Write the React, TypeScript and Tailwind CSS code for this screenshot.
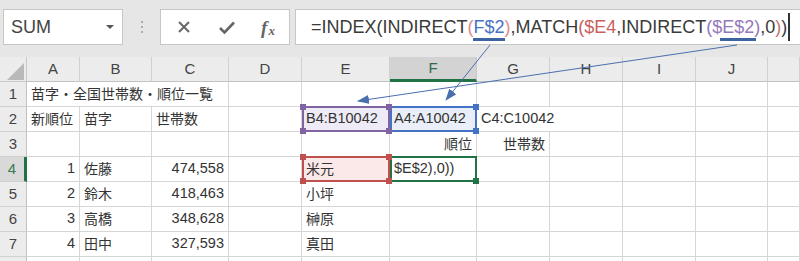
import React from "react";

type BoxKind = "purple" | "blue" | "red" | "green";

type CellDef = {
  t: string;
  right?: boolean;
  cjk?: boolean;
  span?: number;
  box?: BoxKind;
};

const COLS = ["A", "B", "C", "D", "E", "F", "G", "H", "I", "J", "K"];

const ROWS: Record<number, Record<string, CellDef>> = {
  1: { A: { t: "苗字・全国世帯数・順位一覧", cjk: true, span: 3 } },
  2: {
    A: { t: "新順位", cjk: true },
    B: { t: "苗字", cjk: true },
    C: { t: "世帯数", cjk: true },
    E: { t: "B4:B10042", box: "purple" },
    F: { t: "A4:A10042", box: "blue" },
    G: { t: "C4:C10042", span: 2 },
  },
  3: {
    F: { t: "順位", right: true, cjk: true },
    G: { t: "世帯数", right: true, cjk: true },
  },
  4: {
    A: { t: "1", right: true },
    B: { t: "佐藤", cjk: true },
    C: { t: "474,558", right: true },
    E: { t: "米元", cjk: true, box: "red" },
    F: { t: "$E$2),0))", box: "green" },
  },
  5: {
    A: { t: "2", right: true },
    B: { t: "鈴木", cjk: true },
    C: { t: "418,463", right: true },
    E: { t: "小坪", cjk: true },
  },
  6: {
    A: { t: "3", right: true },
    B: { t: "高橋", cjk: true },
    C: { t: "348,628", right: true },
    E: { t: "榊原", cjk: true },
  },
  7: {
    A: { t: "4", right: true },
    B: { t: "田中", cjk: true },
    C: { t: "327,593", right: true },
    E: { t: "真田", cjk: true },
  },
  8: {},
};

function Corner({ pos, color }: { pos: string; color: string }) {
  return <span className={`absolute z-20 size-[6px] ${pos} ${color}`} />;
}

function RangeBox({ kind }: { kind: BoxKind }) {
  if (kind === "purple") {
    return (
      <div className="absolute inset-[-1px_-1px_-1px_0px] border-2 border-[#8064a2] bg-[#efebf6]">
        <Corner pos="-left-[4px] -top-[4px]" color="bg-[#8064a2]" />
        <Corner pos="-right-[4px] -top-[4px]" color="bg-[#8064a2]" />
        <Corner pos="-left-[4px] -bottom-[4px]" color="bg-[#8064a2]" />
        <Corner pos="-right-[4px] -bottom-[4px]" color="bg-[#8064a2]" />
      </div>
    );
  }
  if (kind === "blue") {
    return (
      <div className="absolute inset-[-1px_-1px_-1px_0px] border-2 border-[#4472c4] bg-[#e9eef8]">
        <Corner pos="-right-[4px] -top-[4px]" color="bg-[#4472c4]" />
        <Corner pos="-right-[4px] -bottom-[4px]" color="bg-[#4472c4]" />
      </div>
    );
  }
  if (kind === "red") {
    return (
      <div className="absolute inset-[-1px_-1px_-1px_0px] border-2 border-[#c0504d] bg-[#fbe9e9]">
        <Corner pos="-left-[4px] -top-[4px]" color="bg-[#c0504d]" />
        <Corner pos="-right-[4px] -top-[4px]" color="bg-[#c0504d]" />
        <Corner pos="-left-[4px] -bottom-[4px]" color="bg-[#c0504d]" />
        <Corner pos="-right-[4px] -bottom-[4px]" color="bg-[#c0504d]" />
      </div>
    );
  }
  return (
    <div className="absolute inset-[-1px_-1px_-1px_0px] border-2 border-[#217346]">
      <Corner pos="-right-[4px] -bottom-[4px]" color="bg-[#217346]" />
    </div>
  );
}

function Toolbar() {
  return (
    <div className="flex h-[57px] items-start bg-[#e6e6e6] pt-[9px]">
      {/* name box */}
      <div className="ml-[3px] flex h-[36px] w-[120px] items-center justify-between border border-[#c6c6c6] bg-white pl-[7px] pr-[8px]">
        <span className="text-[18px] leading-none text-[#444]">SUM</span>
        <svg width="8" height="4" viewBox="0 0 8 4">
          <path d="M0 0 L8 0 L4 4 Z" fill="#555" />
        </svg>
      </div>
      {/* grip dots */}
      <div className="flex h-[36px] w-[37px] flex-col items-center justify-center gap-[3px]">
        <span className="size-[2px] rounded-full bg-[#9a9a9a]" />
        <span className="size-[2px] rounded-full bg-[#9a9a9a]" />
        <span className="size-[2px] rounded-full bg-[#9a9a9a]" />
      </div>
      {/* cancel / enter / fx */}
      <div className="flex h-[36px] w-[130px] items-center border border-[#c6c6c6] bg-white">
        <div className="flex w-[46px] justify-center">
          <svg width="12" height="12" viewBox="0 0 12 12">
            <path d="M1 1 L11 11 M11 1 L1 11" stroke="#666" strokeWidth="2" />
          </svg>
        </div>
        <div className="flex w-[40px] justify-center">
          <svg width="16" height="13" viewBox="0 0 16 13">
            <path d="M1 7 L5.5 11.5 L15 1.5" stroke="#666" strokeWidth="2.6" fill="none" />
          </svg>
        </div>
        <div className="flex w-[40px] items-end justify-center pl-[2px] font-['Liberation_Serif',serif] italic text-[#666]">
          <span className="text-[19px] leading-none font-bold">f</span>
          <span className="ml-[1px] text-[13px] leading-none font-bold">x</span>
        </div>
      </div>
      {/* formula bar */}
      <div className="ml-[5px] flex h-[36px] flex-1 items-center border-y border-l border-[#c6c6c6] bg-white pl-[15px] font-['Liberation_Sans',sans-serif] text-[18px] whitespace-nowrap text-[#3a3a3a]">
        <span>=INDEX(INDIRECT</span>
        <span className="text-[#de8a8a]">(</span>
        <span className="text-[#4472c4]">F$2</span>
        <span className="text-[#de8a8a]">)</span>
        <span>,MATCH</span>
        <span className="text-[#c9605d]">($E4</span>
        <span>,INDIRECT</span>
        <span className="text-[#9678bd]">($E$2)</span>
        <span>,0</span>
        <span className="text-[#c07878]">)</span>
        <span>)</span>
        <span className="ml-[1px] inline-block h-[28px] w-[2px] bg-[#333]" />
      </div>
    </div>
  );
}

function HeaderRow() {
  return (
    <>
      <div className="relative border-r border-b border-[#c8c8c8] bg-[#ececec]">
        <svg className="absolute left-[7px] top-[6px]" width="17" height="17" viewBox="0 0 17 17">
          <path d="M0 17 L17 17 L17 0 Z" fill="#b9b9b9" />
        </svg>
      </div>
      {COLS.map((c) =>
        c === "F" ? (
          <div
            key={c}
            className="flex items-center justify-center border-r border-b-[3px] border-r-[#c8c8c8] border-b-[#217346] bg-[#d3d3d3] text-[15px] text-[#2f6b45]"
          >
            {c}
          </div>
        ) : (
          <div
            key={c}
            className="flex items-center justify-center border-r border-b border-[#d0d0d0] border-b-[#c2c2c2] bg-[#ececec] text-[15px] text-[#444]"
          >
            {c === "K" ? "" : c}
          </div>
        ),
      )}
    </>
  );
}

function DataRow({ r }: { r: number }) {
  const defs = ROWS[r] ?? {};
  const cells: React.ReactNode[] = [];
  let skip = 0;
  COLS.forEach((c) => {
    if (skip > 0) {
      skip--;
      return;
    }
    const d = defs[c];
    const span = d?.span ?? 1;
    skip = span - 1;
    const spanCls = span === 3 ? "col-span-3" : span === 2 ? "col-span-2" : "";
    cells.push(
      <div
        key={c}
        className={`relative flex items-center overflow-visible border-r border-b border-[#d6d6d6] px-[4px] whitespace-nowrap text-[#333] ${spanCls} ${
          d?.right ? "justify-end" : "justify-start"
        }`}
      >
        {d?.box && <RangeBox kind={d.box} />}
        {d && (
          <span className={`relative z-10 ${d.cjk ? "text-[14px]" : "text-[14.5px]"}`}>{d.t}</span>
        )}
      </div>,
    );
  });

  const active = r === 4;
  return (
    <>
      {active ? (
        <div className="flex items-center justify-center border-r-[3px] border-b border-r-[#217346] border-b-[#d0d0d0] bg-[#d9d9d9] text-[15px] text-[#3d7a52]">
          {r}
        </div>
      ) : (
        <div className="flex items-center justify-center border-r border-b border-r-[#c2c2c2] border-b-[#d0d0d0] bg-[#ececec] text-[15px] text-[#444]">
          {r < 8 ? r : ""}
        </div>
      )}
      {cells}
    </>
  );
}

function Arrows() {
  return (
    <svg className="pointer-events-none absolute left-0 top-0 z-30" width="800" height="261" viewBox="0 0 800 261">
      <defs>
        <marker
          id="head"
          markerUnits="userSpaceOnUse"
          markerWidth="12"
          markerHeight="9"
          refX="11"
          refY="4.5"
          orient="auto"
        >
          <path d="M0 0 L12 4.5 L0 9 Z" fill="#4a6fae" />
        </marker>
      </defs>
      <rect x="473" y="38" width="32" height="3" fill="#3d63a3" />
      <rect x="720" y="38" width="36" height="3" fill="#3d63a3" />
      <line x1="490" y1="45" x2="446" y2="100" stroke="#4a6fae" strokeWidth="1" markerEnd="url(#head)" />
      <line x1="737" y1="45" x2="358" y2="101" stroke="#4a6fae" strokeWidth="1" markerEnd="url(#head)" />
    </svg>
  );
}

export default function App() {
  return (
    <div className="relative h-[261px] w-[800px] overflow-hidden bg-white font-['Liberation_Sans','Noto_Sans_CJK_JP',sans-serif]">
      <Toolbar />
      <div className="grid auto-rows-[25px] grid-cols-[27px_53px_72px_77px_73px_88px_87px_73px_73px_73px_72px_32px]">
        <HeaderRow />
        {[1, 2, 3, 4, 5, 6, 7, 8].map((r) => (
          <DataRow key={r} r={r} />
        ))}
      </div>
      <Arrows />
    </div>
  );
}
